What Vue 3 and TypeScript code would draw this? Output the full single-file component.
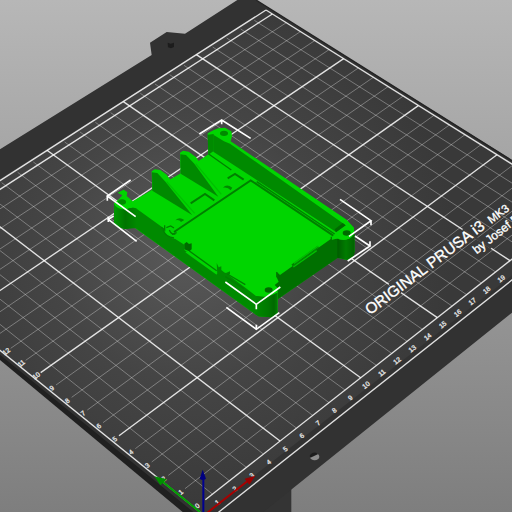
<script setup lang="ts">
type Point = [number, number]
interface Anchor { bed: Point; view: Point }
interface Segment { from: Point; to: Point; major: boolean }
interface Label { text: string; at: Point }

/* Known bed positions (cm) and where the camera puts them in the view. */
const anchors: Anchor[] = [
  { bed: [5, 0], view: [840, 1323] },
  { bed: [20, 0], view: [1530, 782] },
  { bed: [10, 20], view: [160, 465] },
  { bed: [25, 20], view: [817, 42] },
]

/* Solves the eight camera coefficients by Gauss-Jordan elimination. */
function solveCamera(points: Anchor[]): number[] {
  const rows: number[][] = points.flatMap(({ bed: [x, y], view: [u, v] }) => [
    [x, y, 1, 0, 0, 0, -u * x, -u * y, u],
    [0, 0, 0, x, y, 1, -v * x, -v * y, v],
  ])
  for (let c = 0; c < 8; c++) {
    let best = c
    for (let r = c + 1; r < 8; r++) {
      if (Math.abs(rows[r][c]) > Math.abs(rows[best][c])) best = r
    }
    const swap = rows[c]
    rows[c] = rows[best]
    rows[best] = swap
    const pivot = rows[c][c]
    rows[c] = rows[c].map((n) => n / pivot)
    for (let r = 0; r < 8; r++) {
      if (r === c) continue
      const k = rows[r][c]
      rows[r] = rows[r].map((n, i) => n - k * rows[c][i])
    }
  }
  return rows.map((r) => r[8])
}

const camera = solveCamera(anchors)

function project(x: number, y: number): Point {
  const [a, b, c, d, e, f, g, h] = camera
  const w = g * x + h * y + 1
  return [Math.round((a * x + b * y + c) / w), Math.round((d * x + e * y + f) / w)]
}

const range = (from: number, to: number): number[] =>
  Array.from({ length: to - from + 1 }, (_, i) => from + i)

const rear = 20.45

const grid: Segment[] = [
  ...range(1, 25).map((x) => ({
    from: project(x, 0),
    to: project(x, x % 5 ? 20.3 : rear),
    major: x % 5 === 0,
  })),
  ...range(1, 20).map((y) => ({
    from: project(0.4, y),
    to: project(25, y),
    major: y % 5 === 0,
  })),
].sort((p, q) => Number(p.major) - Number(q.major))

const borders: Segment[] = [
  { from: project(0.6, 0), to: project(25, 0), major: true },
  { from: project(0.4, -0.85), to: project(25, -0.85), major: true },
  { from: project(0, -0.3), to: project(0, rear), major: true },
  { from: project(0, rear), to: project(25, rear), major: true },
]

const labels: Label[] = [
  ...range(1, 19).map((n) => ({ text: String(n), at: project(n - 0.15, -0.45) })),
  ...range(0, 12).map((n) => ({ text: String(n), at: project(0.15, n) })),
]

const brackets: string[] = [
  'M598 402L665 360L752 415M665 360V373',
  'M392 540L322 588L407 650M322 588V602',
  'M410 724L325 658L341 648M325 650V666',
  'M1020 598L1113 662L1047 709M1113 662V676',
  'M1065 708L1110 738L1043 783M1110 724V738',
  'M676 846L769 913L841 861M769 913V928',
  'M679 922L769 988L838 938M769 974V988',
]
</script>

<template>
  <main class="viewport">
    <svg class="scene" viewBox="0 0 1536 1536" preserveAspectRatio="xMidYMid slice" role="img" aria-label="Print bed with model">
      <defs>
        <radialGradient id="glow" gradientUnits="userSpaceOnUse" cx="560" cy="740" r="800">
          <stop offset="0" stop-color="#5a5a5a" />
          <stop offset="0.5" stop-color="#454545" />
          <stop offset="1" stop-color="#393939" />
        </radialGradient>
        <linearGradient id="postLeft">
          <stop offset="0" stop-color="#009800" />
          <stop offset="0.5" stop-color="#007400" />
          <stop offset="1" stop-color="#008a00" />
        </linearGradient>
        <linearGradient id="postFront">
          <stop offset="0" stop-color="#008a00" />
          <stop offset="0.6" stop-color="#007800" />
          <stop offset="0.85" stop-color="#006800" />
          <stop offset="1" stop-color="#008000" />
        </linearGradient>
        <linearGradient id="postRight">
          <stop offset="0" stop-color="#005c00" />
          <stop offset="0.5" stop-color="#007c00" />
          <stop offset="1" stop-color="#006200" />
        </linearGradient>
      </defs>

      <!-- heated bed frame -->
      <g>
        <path class="leg" d="M780 1536L874 1460V1536Z" />
        <path class="frame" d="M0 448L455 165L450 128L500 96L555 101L712 0H768L1536 480V938L790 1536H555L0 1076Z" />
        <path class="side" d="M0 1064L580 1536H548L0 1080Z" />
        <path class="hole" d="M503 128L512 131L522 128V141L513 145L504 142Z" />
        <ellipse class="drill" cx="944" cy="1370" rx="14" ry="11" />
        <path class="hole" d="M931 1373A14 11 0 0 1 955 1362Z" />
      </g>

      <!-- printable sheet -->
      <path class="sheet" fill="url(#glow)" d="M0 537L797 30L1536 494V826L622 1536H596L0 1055Z" />
      <path class="rim" d="M768 0L1536 482" />
      <g>
        <line v-for="(s, i) in grid" :key="`g${i}`" :class="s.major ? 'major' : 'minor'"
          :x1="s.from[0]" :y1="s.from[1]" :x2="s.to[0]" :y2="s.to[1]" />
        <line v-for="(s, i) in borders" :key="`b${i}`" class="major"
          :x1="s.from[0]" :y1="s.from[1]" :x2="s.to[0]" :y2="s.to[1]" />
        <path class="gap" d="M1168 851L1204 877M1388 688L1474 744" />
      </g>
      <g class="ruler">
        <text v-for="(l, i) in labels" :key="`l${i}`"
          :transform="`translate(${l.at[0]} ${l.at[1]}) rotate(-38)`" dy="7">{{ l.text }}</text>
      </g>
      <g class="brand">
        <text class="brand-name" transform="translate(1110 946) rotate(-37)">ORIGINAL PRUSA i3</text>
        <text class="brand-model" transform="translate(1474 672) rotate(-37)">MK3</text>
        <text class="brand-by" transform="translate(1430 763) rotate(-38)">by Josef Prusa</text>
      </g>

      <!-- axes -->
      <g>
        <path class="axis green" d="M600 1536L484 1442" />
        <path class="tip green" d="M463 1429L501 1438L481 1456Z" />
        <path class="axis red" d="M622 1538L742 1444" />
        <path class="tip red" d="M766 1427L734 1436L748 1454Z" />
        <path class="axis blue" d="M610 1536V1438" />
        <path class="tip blue" d="M608 1409L599 1436Q608 1444 618 1436Z" />
      </g>

      <!-- model -->
      <g>
        <path class="top" d="M342 610L358 596L367 586L353 578L371 569L382 577L380 588L398 604L455 570L540 521L625 463L623 400L640 391L655 385L675 383L694 394L696 408L692 424L1040 659L1062 683L1064 755L1045 781L1012 773L833 898L832 940L815 952L776 949L765 942L400 680L376 687L350 680L342 672Z" />
        <path class="wall" d="M342 612Q350 629 376 629Q398 620 410 626L490 684Q494 711 526 717L553 734V750L650 822L676 818L740 866L768 888L800 892L832 878V940L815 952L776 949L765 942L402 681L376 687L350 680L342 672Z" />
        <path fill="url(#postLeft)" d="M342 612Q350 629 376 629Q398 620 410 626V684L376 687L350 680L342 672Z" />
        <path fill="url(#postFront)" d="M768 888Q802 896 832 878V940L815 952L776 949L765 942Z" />
        <path class="shade" d="M830 815L840 825L1002 710L1016 716V772L833 898V864L824 855L836 845L830 832Z" />
        <path fill="url(#postRight)" d="M1012 716Q1045 729 1064 700V755Q1062 780 1045 781L1012 773Z" />
        <path class="top" d="M1005 697L1035 678L1062 690Q1061 720 1032 718Q1014 712 995 720L992 710Z" />

        <!-- rear wall -->
        <path class="wall" d="M640 404L672 424L690 431L1037 676L1008 696L640 455Z" />
        <path class="wall" d="M623 404L641 402V453L625 464Z" />
        <path class="deep" d="M1008 697L1037 676L1028 669L1004 688Z" />
        <path class="groove" d="M626 462L694 510M770 545L1004 702" />

        <!-- fins -->
        <path class="top" d="M455 514L464 508L481 510L500 524L587 640L575 646L457 572Z" />
        <path class="wall" d="M456 517L472 519L497 546L577 646L457 572Z" />
        <path class="top" d="M540 458L549 452L566 455L588 472L668 582L655 590L542 522Z" />
        <path class="wall" d="M541 463L558 465L583 491L655 590L542 521Z" />
        <path class="ridge" d="M500 545L584 640M587 491L664 583" />

        <!-- recess outline -->
        <path class="groove wide" d="M522 696L752 541L1000 707" />
        <path class="groove" d="M516 703L530 698" />
        <path class="groove wide" d="M572 610L615 582L643 601M683 535L705 522L731 539" />
        <path class="wall" d="M526 661Q538 649 553 660L543 666Q538 658 526 661ZM669 563Q680 550 697 563L692 571Q683 560 669 563Z" />
        <path class="groove" d="M484 682L494 690V676M489 690Q498 712 522 714M499 683L512 678L522 684M508 690Q514 705 526 702" />
        <path class="deep" d="M553 731L560 726L567 732L575 730V748L568 754L553 748Z" />
        <path class="top" d="M556 757L564 754L650 812V824Z" />
        <path class="groove" d="M568 753L650 812" />
        <path class="wall" d="M650 789L656 802L664 799V810L676 820L690 814V822L676 830L652 826Z" />
        <path class="groove" d="M682 822L736 854M676 830L732 866" />
        <path class="groove wide" d="M876 796L955 740" />
        <path class="ridge" d="M882 790L955 738M880 801L950 752" />
        <path class="groove" d="M994 710V720M830 816V832" />

        <ellipse class="wall" cx="672" cy="400" rx="12" ry="8" />
        <ellipse class="wall" cx="366" cy="606" rx="12" ry="8" />
        <ellipse class="deep" cx="1040" cy="699" rx="12" ry="8" />
        <ellipse class="deep" cx="806" cy="870" rx="12" ry="8" />
      </g>

      <!-- selection box corners -->
      <path v-for="(d, i) in brackets" :key="`s${i}`" class="bracket" :d="d" />
    </svg>
  </main>
</template>

<style>
body {
  margin: 0;
}
</style>

<style scoped>
.viewport {
  display: flex;
  min-height: 100vh;
  background: linear-gradient(#b7b7b7, #7e7e7e);
}
.scene {
  display: block;
  width: 100%;
  height: 100vh;
}
.frame { fill: #323232; }
.leg { fill: #343434; }
.side { fill: #202020; }
.hole { fill: #1c1c1c; }
.drill { fill: #8c8c8c; }
.rim { fill: none; stroke: #242424; stroke-width: 4; }
.minor { stroke: #fff; stroke-opacity: 0.32; stroke-width: 3; }
.major { stroke: #fff; stroke-opacity: 0.85; stroke-width: 4; }
.gap { fill: none; stroke: #3e3e3e; stroke-width: 8; }
.ruler {
  font-family: "Liberation Sans", sans-serif;
  font-size: 20px;
  fill: #e0e0e0;
  stroke: #e0e0e0;
  stroke-width: 1;
  text-anchor: middle;
}
.brand {
  font-family: "Liberation Sans", sans-serif;
  fill: #fff;
  stroke: #fff;
  stroke-width: 1;
}
.brand-name { font-size: 46px; }
.brand-model { font-size: 34px; }
.brand-by { font-size: 36px; }
.axis { fill: none; stroke-width: 6; }
.axis.green { stroke: #00a000; }
.axis.red { stroke: #a80000; }
.axis.blue { stroke: #000090; }
.tip.green { fill: #009000; }
.tip.red { fill: #980000; }
.tip.blue { fill: #000080; }
.top { fill: #00d500; }
.wall { fill: #008a00; }
.shade { fill: #007000; }
.deep { fill: #006a00; }
.groove { fill: none; stroke: #008000; stroke-width: 4; }
.groove.wide { stroke-width: 6; }
.ridge { fill: none; stroke: #00c000; stroke-width: 4; }
.bracket { fill: none; stroke: #fff; stroke-width: 5; }
</style>
